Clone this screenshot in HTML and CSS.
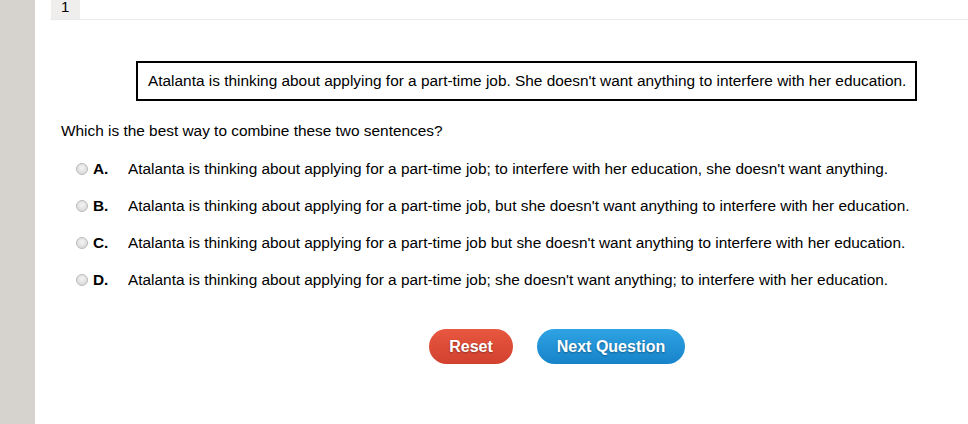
FILE: index.html
```html
<!DOCTYPE html>
<html>
<head>
<meta charset="utf-8">
<link rel="stylesheet" href="styles.css">
</head>
<body>
<div class="page">
  <div class="sidebar"></div>
  <div class="main">
    <div class="tabs"><div class="tab">1</div></div>
    <div class="content">
      <div class="passage">Atalanta is thinking about applying for a part-time job. She doesn't want anything to interfere with her education.</div>
      <div class="question">Which is the best way to combine these two sentences?</div>
      <div class="options">
        <label class="option"><span class="radio"></span><span class="letter">A.</span><span class="text">Atalanta is thinking about applying for a part-time job; to interfere with her education, she doesn't want anything.</span></label>
        <label class="option"><span class="radio"></span><span class="letter">B.</span><span class="text">Atalanta is thinking about applying for a part-time job, but she doesn't want anything to interfere with her education.</span></label>
        <label class="option"><span class="radio"></span><span class="letter">C.</span><span class="text">Atalanta is thinking about applying for a part-time job but she doesn't want anything to interfere with her education.</span></label>
        <label class="option"><span class="radio"></span><span class="letter">D.</span><span class="text">Atalanta is thinking about applying for a part-time job; she doesn't want anything; to interfere with her education.</span></label>
      </div>
      <div class="buttons">
        <button class="btn reset">Reset</button>
        <button class="btn next">Next Question</button>
      </div>
    </div>
  </div>
</div>
</body>
</html>
```

FILE: styles.css
```css
html, body {
  margin: 0;
  padding: 0;
  background: #ffffff;
}
body {
  font-family: "Liberation Sans", Arial, sans-serif;
  color: #000;
  font-size: 15.4px;
}
.page {
  display: flex;
  height: 424px;
}
.sidebar {
  width: 35px;
  background: #d6d3ce;
  flex: none;
}
.main {
  flex: 1;
  padding-left: 15px;
}
.tabs {
  height: 19px;
  border-bottom: 1px solid #ebebeb;
  display: flex;
}
.tab {
  width: 29px;
  margin-left: 1px;
  background: #efeeec;
  font-size: 15px;
  line-height: 14px;
  padding-left: 10px;
  box-sizing: border-box;
}
.content {
  padding-left: 11px;
}
.passage {
  margin-top: 41px;
  margin-left: 75px;
  width: 781px;
  height: 40px;
  box-sizing: border-box;
  border: 2px solid #000;
  padding-left: 10px;
  line-height: 36px;
  white-space: nowrap;
}
.question {
  margin-top: 21px;
  line-height: 18px;
}
.options {
  margin-top: 20px;
  padding-left: 15px;
  display: flex;
  flex-direction: column;
  gap: 19px;
}
.option {
  display: flex;
  align-items: center;
  height: 18px;
  white-space: nowrap;
}
.radio {
  width: 12px;
  height: 12px;
  border-radius: 50%;
  border: 1px solid #bababa;
  background: radial-gradient(circle at 50% 40%, #f4f4f4 0%, #dcdcdc 70%, #cfcfcf 100%);
  box-sizing: border-box;
  flex: none;
}
.letter {
  font-weight: bold;
  margin-left: 5px;
  width: 35px;
  flex: none;
}
.buttons {
  margin-top: 40px;
  margin-left: 368px;
  display: flex;
  gap: 24px;
}
.btn {
  border: none;
  height: 35px;
  border-radius: 18px;
  color: #fff;
  font-family: "Liberation Sans", Arial, sans-serif;
  font-weight: bold;
  font-size: 16px;
  text-shadow: 0 1px 2px rgba(0,0,0,0.35);
  padding: 0;
}
.reset {
  width: 84px;
  background: linear-gradient(#e8573f, #d1412f);
}
.next {
  width: 148px;
  background: linear-gradient(#2ea3e3, #1783c9);
}
```
